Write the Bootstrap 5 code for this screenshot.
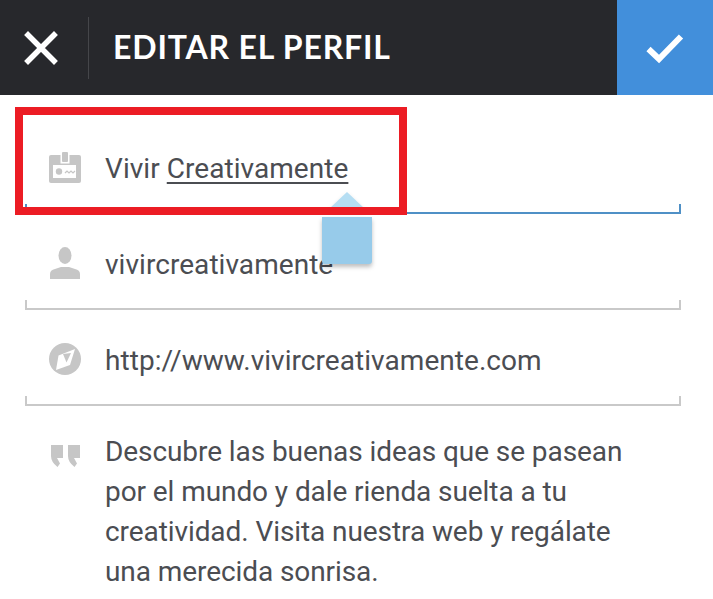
<!DOCTYPE html>
<html lang="es">
<head>
<meta charset="utf-8">
<title>Editar el perfil</title>
<link href="https://cdn.jsdelivr.net/npm/bootstrap@5.3.0/dist/css/bootstrap.min.css" rel="stylesheet">
<style>
html,body{height:599px;overflow:hidden;background:#fff}
body{font-family:Roboto,"Liberation Sans",sans-serif;color:#4b4d52}
.topbar{height:95px;background:#27282c}
.close-cell{width:89px;height:62px;border-right:1px solid #45464a;padding-right:7px;flex:none}
.bar-title{font-family:Lato,"Liberation Sans",sans-serif;font-weight:700;font-size:32px;letter-spacing:.82px;color:#fff;margin:0 0 2px 24px;line-height:1}
.ok-cell{width:96px;height:95px;background:#428fdb}
.form-area{padding:23px 32px 0 25px}
.field-line{padding:30px 0 16px 24px;gap:24px;height:86px;font-size:28px;line-height:40px;letter-spacing:.05px}
.field-text{padding-top:1px}
.field-ico{width:32px;height:40px;flex:none}
.under{height:10px;border:solid #c9c9c9;border-width:0 2px 2px}
.under-on{border-color:#4f90c6}
.sel-text{text-decoration:underline;text-underline-offset:4px;text-decoration-thickness:2px}
.bio-line{padding:26px 40px 0 24px;gap:24px;font-size:28px;line-height:40px;letter-spacing:-.08px}
.red-box{position:absolute;left:15px;top:107px;width:392px;height:108px;border:8px solid #ec1c24}
.sel-handle{position:absolute;left:322px;top:192px;width:50px;height:72px}
.sel-shadow{filter:drop-shadow(0 3px 2px rgba(0,0,0,.25))}
</style>
</head>
<body class="position-relative">
<header class="topbar d-flex align-items-center">
  <div class="close-cell d-flex align-items-center justify-content-center">
    <svg width="34" height="34" viewBox="0 0 34 34"><path d="M4 4 L30 30 M30 4 L4 30" stroke="#fff" stroke-width="5.5" stroke-linecap="square" fill="none"/></svg>
  </div>
  <h1 class="bar-title flex-grow-1">EDITAR EL PERFIL</h1>
  <div class="ok-cell d-flex align-items-center justify-content-center">
    <svg width="40" height="32" viewBox="0 0 40 32"><path d="M3.5 17 L14 27 L36 4.5" stroke="#fff" stroke-width="6" fill="none"/></svg>
  </div>
</header>
<main class="form-area">
  <div class="d-flex field-line">
    <svg class="field-ico" viewBox="0 0 32 40"><rect y="7" width="32" height="28" rx="2" fill="#c6c6c6"/><rect x="4" y="17" width="23" height="13" fill="#fff"/><rect x="11.5" y="6" width="9" height="9.5" fill="#fff"/><rect x="13" y="4" width="6" height="10" rx="1" fill="#c6c6c6"/><circle cx="10" cy="23.5" r="3.2" fill="#c6c6c6"/><path d="M16 25l2-2 2 2 2-2 2 2 2-2" stroke="#c6c6c6" stroke-width="1.2" fill="none"/></svg>
    <div class="field-text"><span>Vivir </span><span class="sel-text">Creativamente</span></div>
  </div>
  <div class="under under-on"></div>
  <div class="d-flex field-line">
    <svg class="field-ico" viewBox="0 0 32 40"><ellipse cx="16" cy="11.5" rx="6.5" ry="8.5" fill="#c6c6c6"/><path fill="#c6c6c6" d="M1 35v-5q0-4 5-5l6-2h8l6 2q5 1 5 5v5z"/></svg>
    <div class="field-text">vivircreativamente</div>
  </div>
  <div class="under"></div>
  <div class="d-flex field-line">
    <svg class="field-ico" viewBox="0 0 32 40"><circle cx="16" cy="19" r="16" fill="#c6c6c6"/><path fill="#fff" d="M26 9 L21 25 L7 30 L9.5 15.5z"/><path fill="#c6c6c6" d="M14 14 L22 13 L17.5 22.5z"/></svg>
    <div class="field-text">http://www.vivircreativamente.com</div>
  </div>
  <div class="under"></div>
  <div class="d-flex bio-line">
    <svg class="field-ico" viewBox="0 0 32 40"><path fill="#c6c6c6" d="M2 13h12v13H8l3 5.5-2.5 3.5Q2 30 2 24zM19 13h12v13h-6l3 5.5-2.5 3.5Q19 30 19 24z"/></svg>
    <div>Descubre las buenas ideas que se pasean por el mundo y dale rienda suelta a tu creatividad. Visita nuestra web y regálate una merecida sonrisa.</div>
  </div>
</main>
<div class="sel-handle sel-shadow">
  <svg width="50" height="72" viewBox="0 0 50 72"><path fill="#b5def3" d="M25 0 L43 17 H7z"/><path fill="#97cbea" d="M0 25 H50 V69 Q50 72 47 72 H3 Q0 72 0 69z"/></svg>
</div>
<div class="red-box"></div>
</body>
</html>
